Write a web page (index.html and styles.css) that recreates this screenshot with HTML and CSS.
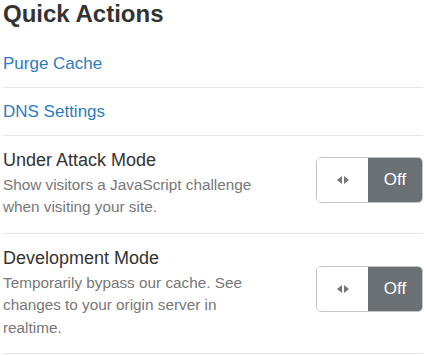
FILE: index.html
```html
<!DOCTYPE html>
<html lang="en">
<head>
  <meta charset="UTF-8">
  <meta name="viewport" content="width=device-width, initial-scale=1.0">
  <title>Quick Actions</title>
  <link rel="stylesheet" href="styles.css">
</head>
<body>
  <div class="panel">
    <h2 class="panel-title">Quick Actions</h2>
    <ul class="actions">
      <li class="action"><a class="action-link" href="#">Purge Cache</a></li>
      <li class="action"><a class="action-link" href="#">DNS Settings</a></li>
      <li class="action setting">
        <div class="setting-text">
          <div class="setting-name">Under Attack Mode</div>
          <div class="setting-desc">Show visitors a JavaScript challenge when visiting your site.</div>
        </div>
        <div class="toggle">
          <span class="toggle-handle"><span class="arrow left"></span><span class="arrow right"></span></span>
          <span class="toggle-state">Off</span>
        </div>
      </li>
      <li class="action setting">
        <div class="setting-text">
          <div class="setting-name">Development Mode</div>
          <div class="setting-desc">Temporarily bypass our cache. See changes to your origin server in realtime.</div>
        </div>
        <div class="toggle">
          <span class="toggle-handle"><span class="arrow left"></span><span class="arrow right"></span></span>
          <span class="toggle-state">Off</span>
        </div>
      </li>
    </ul>
  </div>
</body>
</html>
```

FILE: styles.css
```css
body {
  font-family: 'Liberation Sans', Arial, sans-serif;
  background-color: #fff;
  color: #333;
  margin: 0;
  padding: 2px 6px 0 3px;
}
.panel-title {
  font-size: 24px;
  line-height: 24px;
  font-weight: 700;
  margin: 0 0 14px;
  color: #333;
}
.actions {
  list-style: none;
  margin: 0;
  padding: 0;
}
.action {
  border-bottom: 1px solid #e5e5e5;
  padding: 12px 0 11px;
  font-size: 17px;
  line-height: 24px;
}
.action-link {
  color: #2f7bbf;
  text-decoration: none;
}
.setting {
  display: flex;
  align-items: center;
  justify-content: space-between;
  padding-bottom: 14px;
}
.setting-text {
  width: 262px;
}
.setting-name {
  font-size: 18px;
  color: #333;
}
.setting-desc {
  margin-top: 2px;
  font-size: 15.3px;
  line-height: 22.4px;
  color: #777;
}
.toggle {
  display: flex;
  width: 107px;
  height: 46px;
  box-sizing: border-box;
  border: 1px solid #c4c4c4;
  border-radius: 5px;
  overflow: hidden;
  margin-bottom: 6px;
}
.toggle-handle {
  width: 51px;
  display: flex;
  align-items: center;
  justify-content: center;
  gap: 2px;
  background-color: #fff;
}
.arrow {
  width: 0;
  height: 0;
  border-top: 4px solid transparent;
  border-bottom: 4px solid transparent;
}
.arrow.left {
  border-right: 5px solid #777;
}
.arrow.right {
  border-left: 5px solid #777;
}
.toggle-state {
  flex: 1;
  display: flex;
  align-items: center;
  justify-content: center;
  background-color: #6b7075;
  color: #fff;
  font-size: 17px;
}
```
